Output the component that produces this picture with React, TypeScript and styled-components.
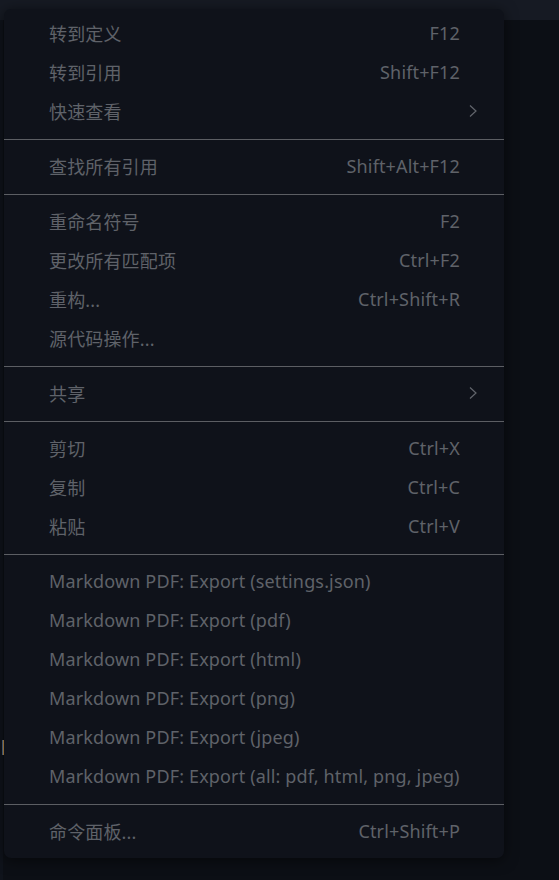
import styled, { createGlobalStyle } from 'styled-components';

const GlobalStyle = createGlobalStyle`
  html, body {
    margin: 0;
    padding: 0;
    background: #0c0f15;
  }
  #root {
    min-height: 880px;
  }
`;

type Item = { label: string; keys?: string; sub?: boolean };

const groups: Item[][] = [
  [
    { label: '转到定义', keys: 'F12' },
    { label: '转到引用', keys: 'Shift+F12' },
    { label: '快速查看', sub: true },
  ],
  [{ label: '查找所有引用', keys: 'Shift+Alt+F12' }],
  [
    { label: '重命名符号', keys: 'F2' },
    { label: '更改所有匹配项', keys: 'Ctrl+F2' },
    { label: '重构...', keys: 'Ctrl+Shift+R' },
    { label: '源代码操作...' },
  ],
  [{ label: '共享', sub: true }],
  [
    { label: '剪切', keys: 'Ctrl+X' },
    { label: '复制', keys: 'Ctrl+C' },
    { label: '粘贴', keys: 'Ctrl+V' },
  ],
  [
    { label: 'Markdown PDF: Export (settings.json)' },
    { label: 'Markdown PDF: Export (pdf)' },
    { label: 'Markdown PDF: Export (html)' },
    { label: 'Markdown PDF: Export (png)' },
    { label: 'Markdown PDF: Export (jpeg)' },
    { label: 'Markdown PDF: Export (all: pdf, html, png, jpeg)' },
  ],
  [{ label: '命令面板...', keys: 'Ctrl+Shift+P' }],
];

function Chevron() {
  return (
    <svg width="10" height="14" viewBox="0 0 10 14" fill="none">
      <path d="M2 1.5 L8 7 L2 12.5" stroke="#62656c" strokeWidth="1.2" />
    </svg>
  );
}

function App() {
  return (
    <>
      <GlobalStyle />
      <Page>
        <TopBar />
        <Editor>
          <GutterMark />
        </Editor>
        <Menu>
          {groups.map((group, gi) => (
            <Group key={gi}>
              {gi > 0 && <Separator />}
              {group.map((item) => (
                <Row key={item.label}>
                  <Label>{item.label}</Label>
                  <Keys>{item.keys}</Keys>
                  <Arrow>{item.sub && <Chevron />}</Arrow>
                </Row>
              ))}
            </Group>
          ))}
        </Menu>
      </Page>
    </>
  );
}

export default App;

const Page = styled.div`
  position: relative;
  width: 559px;
  height: 880px;
  display: flex;
  flex-direction: column;
  overflow: hidden;
  font-family: 'Noto Sans', 'Noto Sans CJK SC', sans-serif;
`;

const TopBar = styled.div`
  height: 20px;
  background: #161a23;
`;

const Editor = styled.div`
  position: relative;
  flex: 1;
  background: #0c0f15;
  border-left: 3px solid #0f131b;
`;

const GutterMark = styled.div`
  position: absolute;
  left: -1px;
  top: 720px;
  width: 2px;
  height: 15px;
  background: #c08f48;
  border-left: 1px solid #4f6b8a;
`;

const Menu = styled.div`
  position: absolute;
  left: 4px;
  top: 9px;
  width: 500px;
  padding: 6px 0;
  box-sizing: border-box;
  background: #0f121a;
  border-radius: 7px;
  box-shadow: 0 2px 14px rgba(0, 0, 0, 0.55);
`;

const Group = styled.div`
  display: flex;
  flex-direction: column;
`;

const Separator = styled.div`
  height: 1px;
  margin: 7px 0 8px;
  background: #5c5e63;
`;

const Row = styled.div`
  height: 39px;
  box-sizing: border-box;
  display: flex;
  align-items: center;
  padding: 0 26px 3px 45px;
  color: #5f6269;
  font-size: 18px;
  letter-spacing: 0.15px;
`;

const Label = styled.span`
  flex: 1;
  white-space: nowrap;
`;

const Keys = styled.span`
  white-space: nowrap;
`;

const Arrow = styled.span`
  width: 18px;
  display: flex;
  justify-content: flex-end;
  align-items: center;
`;
